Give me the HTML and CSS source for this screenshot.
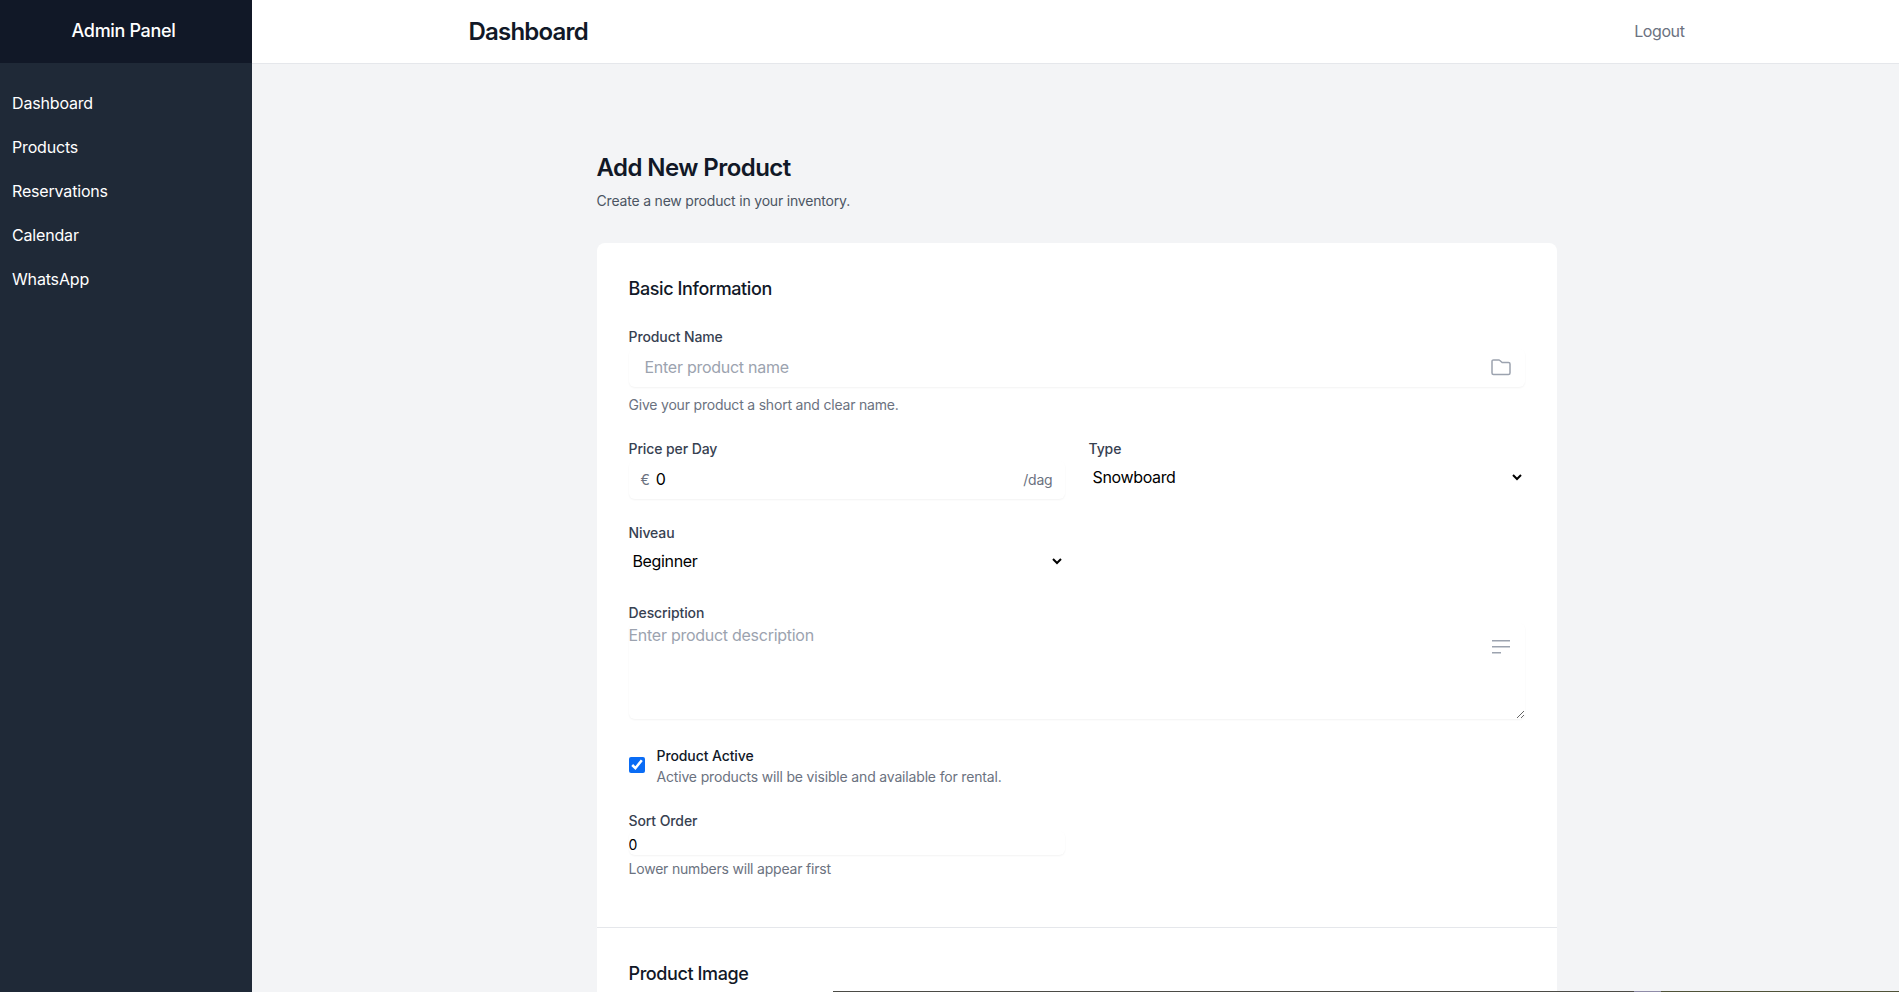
FILE: index.html
```html
<!DOCTYPE html>
<html lang="en">
<head>
    <meta charset="UTF-8">
    <title>Add New Product</title>
    <link rel="stylesheet" href="styles.css">
</head>
<body>
    <div class="Layout">
        <aside class="Sidebar">
            <div class="Sidebar__brand">Admin Panel</div>
            <nav class="Sidebar__nav">
                <a href="#">Dashboard</a>
                <a href="#">Products</a>
                <a href="#">Reservations</a>
                <a href="#">Calendar</a>
                <a href="#">WhatsApp</a>
            </nav>
        </aside>

        <div class="Page">
            <header class="Topbar">
                <div class="Topbar__inner">
                    <h1>Dashboard</h1>
                    <a href="#">Logout</a>
                </div>
            </header>

            <main class="Content">
                <h2 class="Content__title">Add New Product</h2>
                <p class="Content__sub">Create a new product in your inventory.</p>

                <form class="Card" action="#">
                    <section class="Card__section">
                        <h3>Basic Information</h3>

                        <div class="Field Field--name">
                            <label for="name">Product Name</label>
                            <div class="Box">
                                <input id="name" class="Box__input" type="text" placeholder="Enter product name">
                                <svg class="Icon" width="24" height="24" viewBox="0 0 24 24" fill="none" stroke="currentColor" stroke-width="1.5" stroke-linejoin="round" stroke-linecap="round"><path d="M3 7.5V18a1.5 1.5 0 0 0 1.5 1.5h15A1.5 1.5 0 0 0 21 18V9a1.5 1.5 0 0 0-1.5-1.5h-6.4L10.6 5.2a1 1 0 0 0-.7-.3H4.5A1.5 1.5 0 0 0 3 6.4z"/></svg>
                            </div>
                            <p class="Hint">Give your product a short and clear name.</p>
                        </div>

                        <div class="Grid">
                            <div class="Field">
                                <label for="price">Price per Day</label>
                                <div class="Box Box--price">
                                    <span class="Box__euro">€</span>
                                    <input id="price" class="Box__input" type="text" value="0">
                                    <span class="Box__unit">/dag</span>
                                </div>
                            </div>
                            <div class="Field">
                                <label for="type">Type</label>
                                <select id="type" class="Select">
                                    <option>Snowboard</option>
                                </select>
                            </div>
                            <div class="Field">
                                <label for="level">Niveau</label>
                                <select id="level" class="Select">
                                    <option>Beginner</option>
                                </select>
                            </div>
                        </div>

                        <div class="Field Field--desc">
                            <label for="desc">Description</label>
                            <div class="Area">
                                <textarea id="desc" placeholder="Enter product description"></textarea>
                                <svg class="Area__icon" width="24" height="24" viewBox="0 0 24 24" fill="none" stroke="currentColor" stroke-width="1.5"><path d="M3 6.75h18M3 12.75h18M3 18.75h9"/></svg>
                            </div>
                        </div>

                        <div class="Check">
                            <input id="active" type="checkbox" checked>
                            <div>
                                <label for="active">Product Active</label>
                                <p>Active products will be visible and available for rental.</p>
                            </div>
                        </div>

                        <div class="Field Field--sort">
                            <label for="sort">Sort Order</label>
                            <input id="sort" class="Sort" type="text" value="0">
                            <p class="Hint">Lower numbers will appear first</p>
                        </div>
                    </section>

                    <section class="Card__section Card__section--image">
                        <h3>Product Image</h3>
                    </section>
                </form>
            </main>
        </div>
    </div>

    <div class="Peek"></div>
</body>
</html>
```

FILE: styles.css
```css
* {
    box-sizing: border-box;
}

html,
body {
    height: 100%;
    overflow: hidden;
}

body {
    margin: 0;
    font-family: 'Inter', 'Liberation Sans', sans-serif;
    background: #f3f4f6;
    color: #111827;
}

a {
    text-decoration: none;
}

h1,
h2,
h3,
p {
    margin: 0;
}

.Layout {
    display: flex;
    height: 100%;
}

.Sidebar {
    flex: 0 0 252px;
    background: #1f2937;
    color: #fff;
}

.Sidebar__brand {
    height: 63px;
    line-height: 61px;
    padding-right: 5px;
    text-align: center;
    font-size: 18px;
    font-weight: 500;
    letter-spacing: -.33px;
    background: #111827;
}

.Sidebar__nav {
    display: flex;
    flex-direction: column;
    padding-top: 18px;
}

.Sidebar__nav a {
    height: 44px;
    line-height: 44px;
    padding-left: 12px;
    font-size: 16px;
    letter-spacing: -.17px;
    color: #fff;
}

.Page {
    flex: 1;
    min-width: 0;
}

.Topbar {
    height: 64px;
    background: #fff;
    border-bottom: 1px solid #e5e7eb;
}

.Topbar__inner {
    display: flex;
    align-items: center;
    justify-content: space-between;
    max-width: 1280px;
    height: 63px;
    margin: 0 auto;
    padding: 0 31px 0 33px;
}

.Topbar h1 {
    font-size: 24px;
    font-weight: 600;
    letter-spacing: -.8px;
    color: #111827;
}

.Topbar a {
    padding-bottom: 1px;
    font-size: 16px;
    letter-spacing: -.4px;
    color: #6b7280;
}

.Content {
    width: 960px;
    margin: 0 auto;
    padding-top: 88px;
    position: relative;
    left: 1px;
}

.Content__title {
    font-size: 24px;
    line-height: 32px;
    font-weight: 600;
    letter-spacing: -.56px;
    color: #111827;
}

.Content__sub {
    margin-top: 7px;
    font-size: 14px;
    line-height: 20px;
    letter-spacing: -.19px;
    color: #4b5563;
}

.Card {
    margin-top: 32px;
    background: #fff;
    border-radius: 8px;
}

.Card__section {
    padding: 32px 32px 48px;
}

.Card__section--image {
    min-height: 300px;
    border-top: 1px solid #e5e7eb;
}

.Card h3 {
    font-size: 18px;
    line-height: 28px;
    font-weight: 500;
    letter-spacing: -.4px;
    color: #111827;
}

.Field label {
    display: block;
    font-size: 14px;
    line-height: 20px;
    font-weight: 500;
    letter-spacing: -.1px;
    color: #374151;
}

.Field--name {
    margin-top: 24px;
}

.Box {
    display: flex;
    align-items: center;
    height: 38px;
    margin-top: 2px;
    padding: 0 12px 2px 16px;
    border-radius: 6px;
    box-shadow: 0 1px 2px rgba(0, 0, 0, .05);
    color: #9ca3af;
}

.Box__input {
    flex: 1;
    min-width: 0;
    height: 100%;
    padding: 0;
    border: none;
    outline: none;
    background: transparent;
    font: inherit;
    font-size: 16px;
    letter-spacing: -.27px;
    color: #000;
}

.Box__input::placeholder,
textarea::placeholder {
    color: #9ca3af;
    opacity: 1;
}

.Icon {
    flex: none;
    color: #9ca3af;
}

.Hint {
    margin-top: 8px;
    font-size: 14px;
    line-height: 20px;
    letter-spacing: -.2px;
    color: #6b7280;
}

.Grid {
    display: grid;
    grid-template-columns: 1fr 1fr;
    column-gap: 24px;
    row-gap: 24px;
    margin-top: 24px;
}

.Box--price {
    padding: 0 12px 2px;
}

.Box__euro {
    margin-right: 6px;
    font-size: 14px;
    color: #6b7280;
}

.Box__unit {
    font-size: 14px;
    letter-spacing: -.2px;
    color: #6b7280;
}

.Select {
    display: block;
    width: 100%;
    height: 24px;
    margin-top: 6px;
    padding: 0;
    border: none;
    outline: none;
    background: #fff;
    font: inherit;
    font-size: 16px;
    letter-spacing: -.35px;
    color: #000;
}

.Field--desc {
    margin-top: 30px;
}

.Area {
    position: relative;
}

.Area textarea {
    display: block;
    width: 100%;
    height: 96px;
    padding: 0;
    border: none;
    outline: none;
    border-radius: 6px;
    box-shadow: 0 1px 2px rgba(0, 0, 0, .05);
    font: inherit;
    font-size: 16px;
    line-height: 24px;
    letter-spacing: -.27px;
    color: #000;
}

.Area__icon {
    position: absolute;
    top: 11px;
    right: 12px;
    color: #9ca3af;
}

.Check {
    display: flex;
    align-items: flex-start;
    margin-top: 27px;
}

.Check input {
    flex: none;
    width: 16px;
    height: 16px;
    margin: 11px 12px 0 0;
    accent-color: #0a6cf5;
}

.Check label {
    display: block;
    font-size: 14px;
    line-height: 20px;
    font-weight: 500;
    letter-spacing: -.1px;
    color: #111827;
}

.Check p {
    margin-top: 1px;
    font-size: 14px;
    line-height: 20px;
    letter-spacing: -.17px;
    color: #6b7280;
}

.Field--sort {
    width: 436px;
    margin-top: 24px;
}

.Sort {
    display: block;
    width: 100%;
    height: 24px;
    padding: 2px 0 0;
    border: none;
    outline: none;
    border-radius: 6px;
    box-shadow: 0 1px 2px rgba(0, 0, 0, .05);
    font: inherit;
    font-size: 14px;
    color: #000;
}

.Field--sort .Hint {
    margin-top: 4px;
}

/* край следующего окна внизу кадра */
.Peek {
    position: fixed;
    left: 833px;
    right: 0;
    bottom: 0;
    height: 1px;
    background: linear-gradient(to right, #4b4b46 801px, #8f8ca8 801px, #8f8ca8 828px, #4f5238 828px);
}
```
